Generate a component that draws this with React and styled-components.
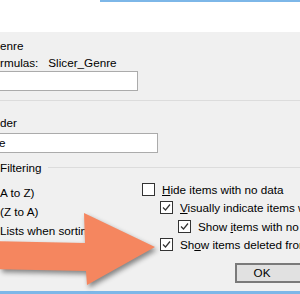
import styled, { createGlobalStyle } from 'styled-components';

const GlobalStyle = createGlobalStyle`
  html, body {
    margin: 0;
    padding: 0;
    background: #f0f0f0;
  }
`;

const Window = styled.div`
  position: relative;
  width: 300px;
  height: 294px;
  overflow: hidden;
  display: flex;
  flex-direction: column;
  font-family: 'Liberation Sans', Arial, sans-serif;
  font-size: 11.7px;
  color: #000;
  background: #f0f0f0;
`;

const TitleArea = styled.div`
  height: 32px;
  flex-shrink: 0;
  background: linear-gradient(#7db7e8, #7db7e8) 100px 0 / 200px 2px no-repeat,
    #fff;
`;

const Dialog = styled.div`
  flex: 1;
  display: flex;
  flex-direction: column;
`;

const Line = styled.div`
  height: 16px;
  line-height: 16px;
  white-space: nowrap;
  margin-top: ${(p) => p.$top || 0}px;
  display: flex;
  gap: ${(p) => p.$gap || 0}px;
`;

const TextBox = styled.div`
  box-sizing: border-box;
  height: 20px;
  width: ${(p) => p.$width}px;
  margin-left: -2px;
  margin-top: ${(p) => p.$top || 0}px;
  padding-left: 2px;
  border: 1px solid #ababab;
  background: #fff;
  line-height: 18px;
  white-space: nowrap;
  overflow: hidden;
`;

const Rule = styled.div`
  height: 1px;
  margin-top: ${(p) => p.$top || 0}px;
  background: #dcdcdc;
`;

const Legend = styled.div`
  height: 15px;
  margin-top: 7px;
  display: flex;
  align-items: center;
  gap: 6px;
  white-space: nowrap;

  &::after {
    content: '';
    flex: 1;
    height: 1px;
    background: #dcdcdc;
  }
`;

const Columns = styled.div`
  display: flex;
  padding-top: 8px;
`;

const LeftColumn = styled.div`
  width: 142px;
  flex-shrink: 0;
  line-height: 19px;
  white-space: nowrap;
`;

const RightColumn = styled.div`
  flex: 1;
  display: flex;
  flex-direction: column;
  gap: 5.4px;
`;

const CheckRow = styled.label`
  display: flex;
  align-items: center;
  gap: 7px;
  height: 13px;
  line-height: 13px;
  padding-left: ${(p) => p.$indent}px;
  white-space: nowrap;

  u {
    text-decoration: underline;
    text-underline-offset: 1px;
  }
`;

const Box = styled.span`
  box-sizing: border-box;
  width: 13px;
  height: 13px;
  flex-shrink: 0;
  border: 1px solid #333;
  background: #fff;
  display: flex;

  svg {
    display: block;
  }
`;

const ButtonRow = styled.div`
  display: flex;
  justify-content: flex-end;
  margin-top: 12px;
  margin-right: -17px;
`;

const Button = styled.button`
  box-sizing: border-box;
  width: 82px;
  height: 20px;
  padding: 0 28px 0 0;
  border: 2px solid #7a7a7a;
  background: #e1e1e1;
  font: inherit;
  color: #000;
  line-height: 16px;
`;

const BottomBar = styled.div`
  height: 3px;
  flex-shrink: 0;
  background: #7db7e8;
`;

const Arrow = styled.svg`
  position: absolute;
  left: 0;
  top: 0;
  pointer-events: none;
  filter: drop-shadow(2px 3px 2.5px rgba(0, 0, 0, 0.45));
`;

function Checkbox({ checked }) {
  return (
    <Box>
      {checked && (
        <svg width="11" height="11" viewBox="0 0 11 11">
          <polyline
            points="2,5.5 4.5,8 9,2.5"
            fill="none"
            stroke="#333"
            strokeWidth="1.2"
          />
        </svg>
      )}
    </Box>
  );
}

const options = [
  { indent: 0, checked: false, label: <><u>H</u>ide items with no data</> },
  { indent: 18, checked: true, label: <><u>V</u>isually indicate items with no data</> },
  { indent: 36, checked: true, label: <>Show <u>i</u>tems with no data last</> },
  { indent: 18, checked: true, label: <>Sh<u>o</u>w items deleted from the data source</> },
];

export default function App() {
  return (
    <Window>
      <GlobalStyle />
      <TitleArea />
      <Dialog>
        <Line $top={6}>enre</Line>
        <Line $top={1} $gap={10}>
          <span>rmulas:</span>
          <span>Slicer_Genre</span>
        </Line>
        <TextBox $width={140} />
        <Rule $top={9} />
        <Line $top={14}>der</Line>
        <TextBox $width={160} $top={2}>
          <span style={{ marginLeft: -2 }}>e</span>
        </TextBox>
        <Legend>Filtering</Legend>
        <Columns>
          <LeftColumn>
            <div>A to Z)</div>
            <div>(Z to A)</div>
            <div>Lists when sorting</div>
          </LeftColumn>
          <RightColumn>
            {options.map((o, i) => (
              <CheckRow key={i} $indent={o.indent}>
                <Checkbox checked={o.checked} />
                <span>{o.label}</span>
              </CheckRow>
            ))}
          </RightColumn>
        </Columns>
        <ButtonRow>
          <Button>OK</Button>
        </ButtonRow>
      </Dialog>
      <BottomBar />
      <Arrow width="300" height="294" viewBox="0 0 300 294">
        <polygon
          points="-10,241 85,243 84,213 155,247 87,285 86,271 -10,269"
          fill="#f5865f"
        />
      </Arrow>
    </Window>
  );
}
